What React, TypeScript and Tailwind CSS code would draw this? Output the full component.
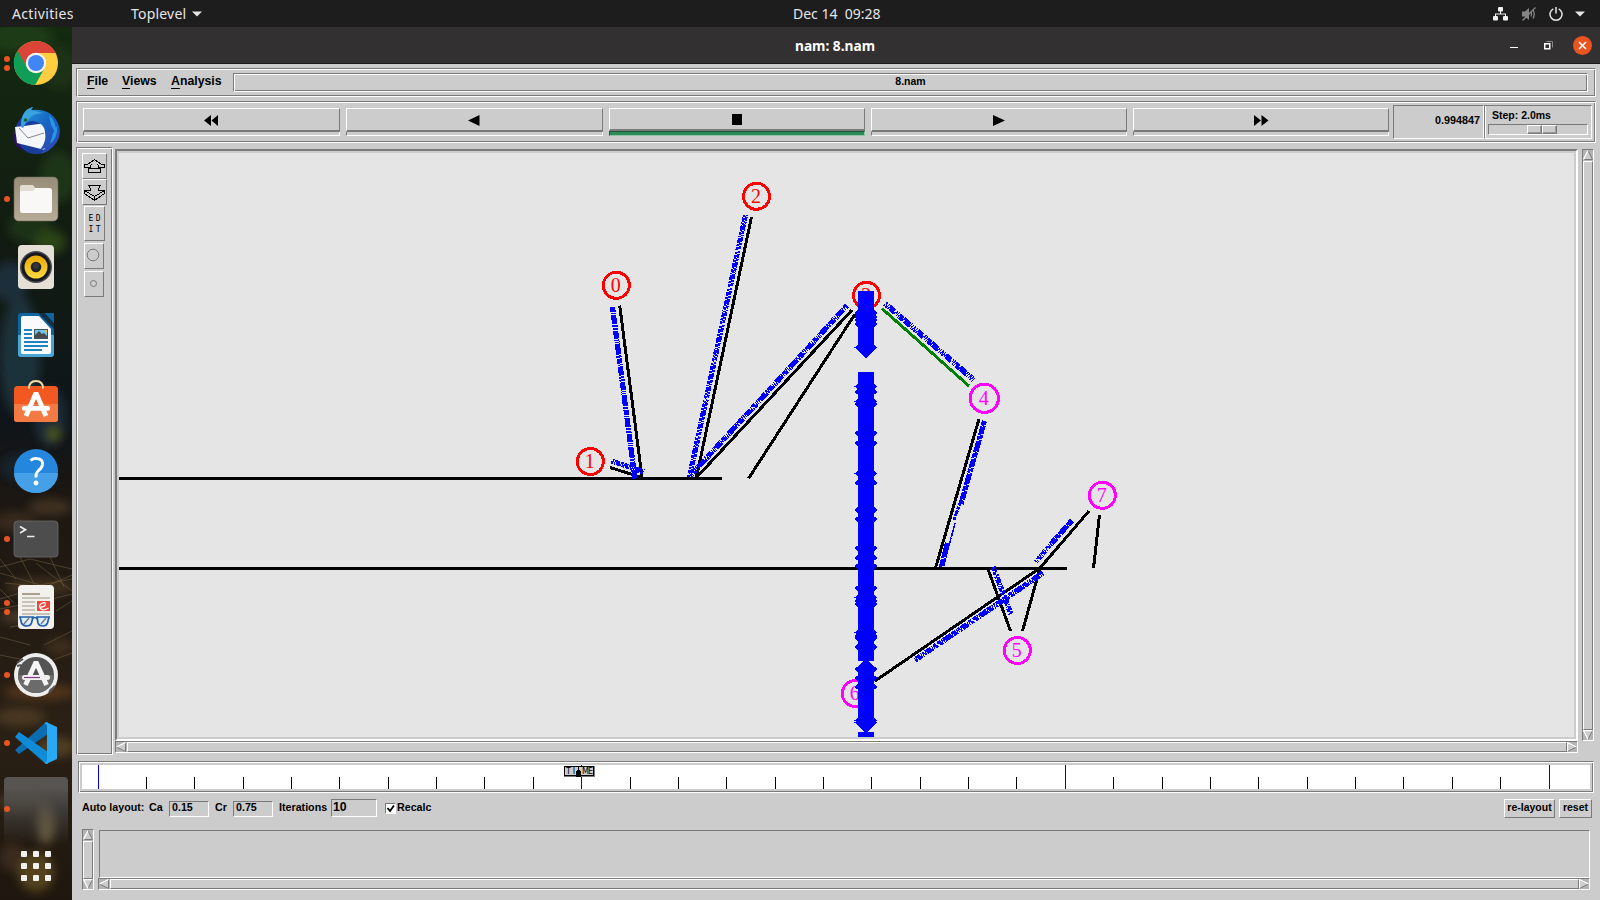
import React from "react";

const GROOVE =
  "border border-t-[#7a7a7a] border-l-[#7a7a7a] border-r-white border-b-white shadow-[inset_1px_1px_0_#fff,inset_-1px_-1px_0_#7a7a7a]";
const RAISED = "border border-t-white border-l-white border-r-[#7a7a7a] border-b-[#7a7a7a]";
const SUNKEN = "border border-t-[#7a7a7a] border-l-[#7a7a7a] border-r-white border-b-white";
const TK = "font-['Liberation_Sans',sans-serif] font-bold text-black whitespace-nowrap";
const SHELL = "font-['Noto_Sans',sans-serif] whitespace-nowrap";

/* ---------- Top bar ---------- */

function TopBar() {
  return (
    <header className={`${SHELL} flex h-[27px] shrink-0 items-center bg-[#1d1d1d] text-[14px] leading-[27px] text-[#e6e6e6]`}>
      <span className="w-[119px] pl-3 tracking-[0.35px]">Activities</span>
      <span className="w-[62px] pl-3 tracking-[0.2px]">Toplevel</span>
      <svg className="ml-[11px]" width="10" height="6" viewBox="0 0 10 6"><path d="M0 .5h10L5 5.5z" fill="#e6e6e6" /></svg>
      <span className="ml-[591px] w-[100px] whitespace-pre">Dec 14  09:28</span>
      <div className="ml-auto flex items-center pr-[15px]">
        <svg width="15" height="14" viewBox="0 0 15 14" fill="#f2f2f2">
          <rect x="5" y="0" width="5" height="4.5" rx="1" />
          <rect x="0" y="9" width="5" height="4.5" rx="1" />
          <rect x="10" y="9" width="5" height="4.5" rx="1" />
          <path d="M7 4h1v2.500h5V9h-1V7.500H3V9H2V6.500h5z" />
        </svg>
        <svg className="ml-[13px]" width="16" height="14" viewBox="0 0 16 14" fill="none" stroke="#858585">
          <path d="M1 4.500h3L8 1v12L4 9.500H1z" fill="#858585" stroke="none" />
          <path d="M10 5q1.300 2 0 4.500M12 3q2.500 4 0 8.500" strokeWidth="1.300" />
          <path d="M14.500 .5L1.500 13.500" strokeWidth="1.300" />
        </svg>
        <svg className="ml-[12px]" width="14" height="14" viewBox="0 0 14 14" fill="none" stroke="#e6e6e6" strokeWidth="1.500">
          <path d="M4.300 1.800a6 6 0 1 0 5.400 0M7 0v6.500" />
        </svg>
        <svg className="ml-[12px]" width="10" height="6" viewBox="0 0 10 6"><path d="M0 .5h10L5 5.500z" fill="#e6e6e6" /></svg>
      </div>
    </header>
  );
}

/* ---------- Dock ---------- */

function Chrome() {
  return (
    <svg width="46" height="46" viewBox="-23 -23 46 46">
      <circle r="22" fill="#ffcd40" />
      <path d="M-19.050 -11A22 22 0 0 1 19.700 -10H0A10 10 0 0 0 -9 4z" fill="#db4437" />
      <path d="M-18.400 -12.200A22 22 0 0 0 -.8 22L8.660 5A10 10 0 0 1 -8.660 5z" fill="#0f9d58" />
      <circle r="10.200" fill="#f4f4f4" />
      <circle r="8" fill="#4285f4" />
    </svg>
  );
}

function Thunderbird() {
  return (
    <svg width="50" height="50" viewBox="0 0 50 50">
      <defs>
        <linearGradient id="tb" x1="0" y1="0" x2="1" y2="1">
          <stop offset="0" stopColor="#2d9be0" /><stop offset=".5" stopColor="#1565c0" /><stop offset="1" stopColor="#3a3fb0" />
        </linearGradient>
      </defs>
      <circle cx="25" cy="27" r="21" fill="#1a3d9c" />
      <path d="M2 24Q1 35 6 41L16 47Q8 41 7 33z" fill="#2a1260" />
      <path d="M4 21L13 20L35 17L40 22L34 44L6 37z" fill="#f4f6fa" />
      <path d="M8 22L17 32L33 27" fill="none" stroke="#888" strokeWidth="1" />
      <path d="M10 20Q10 4 22 1L20 4Q42 2 48 20Q52 35 37 45L30 48L34 42L28 45Q36 36 34 27Q34 17 22 15Q15 14 12 22z" fill="url(#tb)" />
      <path d="M10 20Q10 4 22 1L20 4L32 7Q20 8 17 14L11 22z" fill="#3aa2dc" />
      <path d="M38 9Q46 16 45 28L40 19zM46 20Q47 32 39 38L42 27z" fill="#2496e8" />
      <circle cx="14.500" cy="14" r="1.800" fill="#163" />
    </svg>
  );
}

function Files() {
  return (
    <svg width="46" height="46" viewBox="0 0 46 46">
      <defs><linearGradient id="fl" x1="0" y1="0" x2="0" y2="1"><stop offset="0" stopColor="#968c78" /><stop offset="1" stopColor="#b5ab97" /></linearGradient></defs>
      <rect x="1" y="1" width="44" height="44" rx="4.500" fill="url(#fl)" stroke="#6c6456" strokeWidth=".6" />
      <path d="M7 11q0-2 2-2h11l3 4v6H7z" fill="#e0dccf" />
      <rect x="7" y="12" width="32" height="25" rx="2.500" fill="#f9f8f6" />
      <path d="M7 11v4h13l2-2-1-2z" fill="#e0dccf" />
    </svg>
  );
}

function Rhythmbox() {
  return (
    <svg width="46" height="46" viewBox="0 0 46 46">
      <defs><linearGradient id="rb" x1="0" y1="0" x2="0" y2="1"><stop offset="0" stopColor="#e9a903" /><stop offset="1" stopColor="#f9db3f" /></linearGradient></defs>
      <rect x="5" y="1" width="36" height="44" rx="4" fill="#e4e0d5" />
      <circle cx="23" cy="23" r="16" fill="#4a4a50" /><circle cx="23" cy="23" r="14.500" fill="#16181f" />
      <circle cx="23" cy="23" r="11.500" fill="url(#rb)" /><circle cx="23" cy="23" r="5.300" fill="#202228" /><circle cx="23" cy="22" r="3" fill="#33363c" />
    </svg>
  );
}

function Writer() {
  return (
    <svg width="46" height="46" viewBox="0 0 46 46">
      <rect x="5" y="1" width="36" height="44" rx="3" fill="#0f659f" />
      <path d="M5 23h36v19q0 3-3 3H8q-3 0-3-3z" fill="#4ba5d3" />
      <path d="M25 1h7l9 10v6z" fill="#123047" />
      <path d="M32 1h9v10z" fill="#0f659f" />
      <path d="M10 4h16l12 13v23q0 2-2 2H10q-2 0-2-2V6q0-2 2-2z" fill="#fafafa" />
      <path d="M11 18h8M11 22h8M11 26h8M11 30h24M11 34h24M11 38h18" stroke="#1d84bd" strokeWidth="2" />
      <rect x="21" y="17" width="14" height="10" fill="#3b5566" /><rect x="22" y="18" width="12" height="8" fill="#6cc5ee" />
      <path d="M22 26v-3l4-4 3 3 2-1 3 3v2z" fill="#4a4a4a" /><path d="M31 18h3v3z" fill="#f4c020" />
    </svg>
  );
}

function Software() {
  return (
    <svg width="46" height="46" viewBox="0 0 46 46">
      <rect x="1" y="6" width="44" height="36" rx="3.500" fill="#f2581f" /><path d="M1 24h44v15q0 3-3 3H4q-3 0-3-3z" fill="#f47a44" />
      <path d="M16 8.500q0-7.500 7-7.500t7 7.500" fill="none" stroke="#f5dba6" strokeWidth="2" />
      <path d="M13 36L23 13L33 36" fill="none" stroke="#fff" strokeWidth="4.800" strokeLinejoin="bevel" />
      <rect x="9" y="26" width="28" height="4.800" rx="2" fill="#fff" />
    </svg>
  );
}

function Help() {
  return (
    <svg width="46" height="46" viewBox="0 0 46 46">
      <circle cx="23" cy="23" r="22" fill="#2487dd" /><path d="M1 25a22 20 0 0 0 44 0z" fill="#46a0e8" />
      <path d="M17.500 12.500q3-2.500 6.500-2Q30 11 29.500 16.500Q29 20 25.500 22.500Q22.500 25 23 29.500" fill="none" stroke="#fff" strokeWidth="2.900" />
      <circle cx="23" cy="35" r="2.400" fill="#fff" />
    </svg>
  );
}

function Terminal() {
  return (
    <svg width="46" height="46" viewBox="0 0 46 46">
      <rect x="1" y="5" width="44" height="36" rx="3.500" fill="#4d4d4d" stroke="#6b6b6b" strokeWidth=".8" />
      <path d="M7 10.500l5.500 3.200L7 17M14 20.500h7.500" fill="none" stroke="#eee" strokeWidth="1.700" />
    </svg>
  );
}

function Evince() {
  return (
    <svg width="46" height="46" viewBox="0 0 46 46">
      <rect x="5" y="1" width="36" height="44" rx="4" fill="#f3f1ed" />
      <path d="M9 10h18" stroke="#a89f8d" strokeWidth="2" /><path d="M9 14h28M9 18h13M9 22h13M9 26h13M9 30h28" stroke="#c8c3b6" strokeWidth="2" />
      <rect x="24" y="17" width="13" height="10" fill="#f0453a" />
      <path d="M26.500 23.500q6.500-1 6-3.500t-4-.5-1 5 8-.5" fill="none" stroke="#fff" strokeWidth="1.300" />
      <path d="M7 33h13l-1.500 6q-1 3-4.500 3-4 0-5.500-3zM24 33h12l-1.500 6q-1 3-4.500 3-4 0-5-3z" fill="#dcebf4" stroke="#1e5fae" strokeWidth="1.700" />
      <path d="M19 35q3-3 5 0" fill="none" stroke="#1e5fae" strokeWidth="1.700" /><path d="M11 40l5-6M28 40l5-6" stroke="#777" strokeWidth="1.400" />
    </svg>
  );
}

function Updater() {
  return (
    <svg width="46" height="46" viewBox="-23 -23 46 46">
      <circle r="22" fill="#eee" /><circle r="18" fill="#545454" /><path d="M-18 0a18 18 0 0 0 36 0z" fill="#6b6b6b" />
      <path d="M-19 -12L-13 -16M15 15L19 11M-19 -9l4 -1M13 18l2 -4" stroke="#545454" strokeWidth="2" />
      <path d="M-10.500 10L0 -13L10.500 10" fill="none" stroke="#f5f5f5" strokeWidth="4.800" strokeLinejoin="bevel" />
      <rect x="-14" y="0" width="28" height="5" rx="2.500" fill="#f0f0f0" /><path d="M-12 2.500h16" stroke="#804080" strokeWidth="1.200" />
    </svg>
  );
}

function Code() {
  return (
    <svg width="46" height="46" viewBox="0 0 46 46">
      <path d="M2 30L6 34L35 14V2L33 2z" fill="#0b6cb0" />
      <path d="M2 17L6 12L35 32V44H33z" fill="#0f8bd8" />
      <path d="M33 2L44 7V39L33 44L31 42Q34 43 34 39V7Q34 3 31 4z" fill="#29a8f4" />
    </svg>
  );
}

const DOCK: { icon: React.ReactNode; dots: number }[] = [
  { icon: <Chrome />, dots: 2 },
  { icon: <Thunderbird />, dots: 0 },
  { icon: <Files />, dots: 1 },
  { icon: <Rhythmbox />, dots: 0 },
  { icon: <Writer />, dots: 0 },
  { icon: <Software />, dots: 0 },
  { icon: <Help />, dots: 0 },
  { icon: <Terminal />, dots: 1 },
  { icon: <Evince />, dots: 2 },
  { icon: <Updater />, dots: 1 },
  { icon: <Code />, dots: 1 },
  { icon: null, dots: 1 },
];

const BLOBS: [number, number, number, number, string][] = [
  [20, 10, 34, 16, "#1d3a16"], [60, 40, 18, 22, "#1a3312"], [58, 150, 18, 26, "#1f3519"], [30, 200, 22, 16, "#1a3018"],
  [10, 255, 18, 20, "#1e2f3b"], [50, 215, 16, 12, "#2c4416"], [20, 330, 20, 60, "#1f303b"], [50, 390, 16, 30, "#1c2c35"],
  [54, 407, 7, 6, "#4e5a0c"], [20, 440, 20, 14, "#17222a"], [50, 480, 22, 8, "#3f3020"], [15, 495, 22, 10, "#382a1d"],
  [40, 560, 34, 8, "#40311f"], [20, 590, 20, 5, "#4f3f2a"], [60, 620, 14, 8, "#3d2d1b"], [40, 665, 36, 8, "#52341c"],
  [20, 690, 26, 9, "#4a3821"], [56, 720, 20, 10, "#503d22"], [20, 775, 22, 10, "#443724"], [46, 795, 9, 22, "#6a5c3c"],
  [12, 830, 12, 14, "#3a2c1b"], [36, 845, 18, 20, "#52431f"],
];

function Dock() {
  return (
    <aside className="relative h-[873px] w-[72px] shrink-0 overflow-hidden bg-[#10140f]">
      <svg className="absolute inset-0" width="72" height="873" viewBox="0 0 72 873">
        <defs>
          <linearGradient id="bgd" x1="0" y1="0" x2="0" y2="1">
            <stop offset="0" stopColor="#142a10" /><stop offset=".25" stopColor="#121b12" /><stop offset=".45" stopColor="#0f151a" />
            <stop offset=".54" stopColor="#1c1712" /><stop offset=".8" stopColor="#2a2015" /><stop offset="1" stopColor="#1f170f" />
          </linearGradient>
          <filter id="soft" x="-50%" y="-50%" width="200%" height="200%"><feGaussianBlur stdDeviation="5" /></filter>
          <filter id="fine"><feGaussianBlur stdDeviation=".5" /></filter>
        </defs>
        <rect width="72" height="873" fill="url(#bgd)" />
        <g filter="url(#soft)">
          {BLOBS.map(([x, y, rx, ry, c], i) => <ellipse key={i} cx={x} cy={y} rx={rx} ry={ry} fill={c} />)}
        </g>
        <g stroke="#7a6243" strokeOpacity=".5" fill="none" filter="url(#fine)">
          <path d="M0 540l30-8 42 10M5 556l40 4 27-12M0 572l34-10M40 575l32-8M0 610l30 8M44 618l28-14M0 532l16 20M50 530l14 30M10 600l40-6M0 546l40 12 32-6M20 530l20 38M0 562l14 14M36 536l36 28M0 582l20-4M56 584l16-10M0 628l20 4M50 634l22-8" />
        </g>
      </svg>
      <div className="relative flex flex-col pt-[2px]">
        {DOCK.map((d, i) => (
          <div key={i} className={`flex h-[68px] items-center ${i === 11 ? "relative mx-1 rounded-t bg-linear-to-b from-[#5c5a58]/90 from-15% via-[#4b4a49]/70 via-45% to-transparent" : "px-1"}`}>
            <div className={`flex flex-col items-center gap-[3px] ${i === 11 ? "-mt-1 w-[6px]" : "w-[6px]"}`}>
              {Array.from({ length: d.dots }, (_, k) => <i key={k} className="size-[6px] rounded-full bg-[#e95420]" />)}
            </div>
            <div className="ml-[1px] flex w-[50px] justify-center">{d.icon}</div>
          </div>
        ))}
        <div className="mt-[6px] ml-[21px] grid w-[30px] grid-cols-3 gap-[6px]">
          {Array.from({ length: 9 }, (_, k) => <i key={k} className="size-[6px] rounded-[1px] bg-[#f2f1ef]" />)}
        </div>
      </div>
    </aside>
  );
}

/* ---------- Tk widgets ---------- */

function Arrow({ dir }: { dir: "l" | "r" | "u" | "d" }) {
  const shape = {
    l: ["M9.500 .5L.5 5", "M.5 5L9.500 9.500V.5", "M0 5L10 0V10z"],
    r: ["M.5 9.500V.5L9.500 5", "M9.500 5L.5 9.500", "M10 5L0 0V10z"],
    u: ["M.5 9.500L5 .5", "M5 .5L9.500 9.500H.5", "M5 0L10 10H0z"],
    d: ["M9.500 .5H.5L5 9.500", "M5 9.500L9.500 .5", "M5 10L0 0H10z"],
  }[dir];
  return (
    <svg className="shrink-0 bg-[#b3b3b3]" width="10" height="10" viewBox="0 0 10 10" fill="none">
      <path d={shape[2]} fill="#ccc" />
      <path d={shape[1]} stroke="#7a7a7a" />
      <path d={shape[0]} stroke="#fff" strokeWidth="1.300" />
    </svg>
  );
}

function HScroll() {
  return (
    <div className={`${SUNKEN} flex h-[12px] w-full bg-[#b3b3b3]`}>
      <Arrow dir="l" /><div className={`${RAISED} ml-px grow bg-[#ccc]`} /><Arrow dir="r" />
    </div>
  );
}

function VScroll() {
  return (
    <div className={`${SUNKEN} flex h-full w-[12px] flex-col bg-[#b3b3b3]`}>
      <Arrow dir="u" /><div className={`${RAISED} mt-px grow bg-[#ccc]`} /><Arrow dir="d" />
    </div>
  );
}

function TitleBar() {
  return (
    <div className={`${SHELL} flex h-[37px] shrink-0 items-center border-b border-[#1b1a1a] bg-[#333031] text-white`}>
      <div className="w-[1438px] pt-[2px] pl-[88px] text-center text-[13.700px] font-bold leading-[34px]">nam: 8.nam</div>
      <i className="mt-[5px] h-px w-[8px] bg-white" />
      <svg className="ml-[26px]" width="9" height="9" viewBox="0 0 9 9" fill="none">
        <path d="M2.500 .5h6v6" stroke="#8a8888" /><rect x=".75" y="2.750" width="5" height="5" stroke="#fff" strokeWidth="1.500" />
      </svg>
      <svg className="ml-[20px]" width="19" height="19" viewBox="0 0 19 19">
        <circle cx="9.500" cy="9.500" r="9.500" fill="#e95420" /><path d="M6 6l7 7M13 6l-7 7" stroke="#fff" strokeWidth="1.600" />
      </svg>
    </div>
  );
}

function MenuBar() {
  return (
    <div className={`${GROOVE} flex h-[29px] items-start pt-1 pl-[10px] pr-[7px] text-[12.300px] ${TK}`}>
      <span className="w-[35px] pt-px leading-[15px]"><u className="underline-offset-[3px]">F</u>ile</span>
      <span className="w-[49px] pt-px leading-[15px]"><u className="underline-offset-[3px]">V</u>iews</span>
      <span className="w-[62px] pt-px leading-[15px]"><u className="underline-offset-[3px]">A</u>nalysis</span>
      <div className={`${GROOVE} h-[19px] grow text-center text-[10.500px] leading-[15px]`}>8.nam</div>
    </div>
  );
}

const BUTTONS = [
  "M7 0v11L0 5.500zM14 0v11L7.500 5.500z",
  "M12.500 0v11L1 5.500z",
  "M2 0h10v11H2z",
  "M1 0v11L13 5.500z",
  "M0 0v11L7 5.500zM7.500 0v11L14.500 5.500z",
];

function ToolBar() {
  return (
    <div className={`${GROOVE} mt-1 flex h-[42px] pt-[3px] pl-[6px]`}>
      <div className="mt-[3px] grid grid-cols-[257px_257px_256px_256px_256px] gap-[6px]">
        {BUTTONS.map((d, i) => (
          <div key={i} className="flex h-[28px] flex-col">
            <div className={`${RAISED} flex h-[24px] items-center justify-center border-b-2 pt-px`}>
              <svg width="15" height="11" viewBox="0 0 15 11"><path d={d} /></svg>
            </div>
            <div className={i === 2 ? "h-[5px] border border-t-[#1d5a3a] border-l-[#1d5a3a] border-r-[#8fc7a6] border-b-[#8fc7a6] bg-[#2e8b57]" : `${SUNKEN} h-[4px] border-t-0`} />
          </div>
        ))}
      </div>
      <div className={`${SUNKEN} ml-1 h-[34px] w-[91px] pr-[3px] text-right text-[10.800px] leading-[29px] ${TK}`}>0.994847</div>
      <div className={`${SUNKEN} h-[34px] w-[108px] pl-[3px] shadow-[inset_1px_0_0_#fff] ${TK}`}>
        <div className="pt-[2px] pl-1 text-[10.500px] leading-[14px]">Step: 2.0ms</div>
        <div className={`${SUNKEN} mt-[2px] flex h-[11px] w-[100px] pl-[38px]`}>
          <div className={`${RAISED} h-[9px] w-[15px] shadow-[inset_-1px_-1px_0_#999]`} />
          <div className={`${RAISED} h-[9px] w-[15px] shadow-[inset_-1px_-1px_0_#999]`} />
        </div>
      </div>
    </div>
  );
}

function ToolPanel() {
  return (
    <div className={`${GROOVE} flex w-[37px] flex-col pt-[5px] pl-[5px]`}>
      <div className={`${RAISED} h-[26px] w-[25px]`}>
        <svg width="23" height="24" viewBox="0 0 23 24" fill="none" stroke="#000" shapeRendering="crispEdges">
          <path d="M11.500 5.500L4.500 10.500H1.500V13.500H6.500L8.500 10.500M11.500 5.500L18.500 10.500H21.500V13.500H16.500L14.500 10.500M5.500 14.500H17.500V18.500H5.500zM7.500 12v3M15.500 12v3" />
        </svg>
      </div>
      <div className={`${RAISED} h-[26px] w-[25px]`}>
        <svg width="23" height="24" viewBox="0 0 23 24" fill="none" stroke="#000" shapeRendering="crispEdges">
          <path d="M5.500 5.500H17.500L15.500 8.500V10H21.500V13.500L11.500 20.500L1.500 13.500V10H7.500V8.500zM1.500 10.500L11.500 16.500L21.500 10.500M11.500 16v4" />
        </svg>
      </div>
      <div className={`${RAISED} mt-[1px] ml-[2px] h-[35px] w-[21px] pt-[6px] pl-[3.500px] font-['DejaVu_Sans_Mono',monospace] text-[8px] leading-[11px] tracking-[2.500px] whitespace-nowrap text-black`}>
        <div>ED</div><div>IT</div>
      </div>
      <div className={`${RAISED} mt-[2px] ml-[2px] h-[26px] w-[20px]`}>
        <svg width="18" height="24" viewBox="0 0 18 24"><circle cx="8" cy="11" r="5.800" fill="none" stroke="#7a7a7a" /></svg>
      </div>
      <div className={`${RAISED} mt-[2px] ml-[2px] h-[26px] w-[20px]`}>
        <svg width="18" height="24" viewBox="0 0 18 24"><circle cx="8.500" cy="11.500" r="3" fill="none" stroke="#7a7a7a" /></svg>
      </div>
    </div>
  );
}

/* ---------- Network canvas ---------- */

type Seg = [number, number, number, number];

const LINKS: Seg[] = [
  [119, 478.5, 722, 478.5], [119, 568.5, 1067, 568.5], [619.7, 305.5, 642, 477], [751.5, 217, 696.5, 477],
  [852, 310, 697, 477], [855, 314, 748.5, 478.5], [610, 467.5, 642, 477.5], [979, 419, 935.5, 568],
  [1089, 511, 1040, 568], [1099.5, 515, 1093.5, 568], [988, 569, 1010.5, 631], [1040, 568, 1022.5, 631], [875, 681, 1040, 568],
];

const FLOWS: [Seg, string, number][] = [
  [[612.5, 307, 635, 479], "5 1 1 1 9 1 2 1 2 1 8 1 1 1 1 1 11 1 2 1", 5],
  [[745.5, 215, 689.5, 477], "2 1 4 1 2 1 6 1 3 1 1 1 5 1 2 1 3 2", 5],
  [[847, 305.5, 690, 476], "4 1 1 1 8 1 1 1 1 1 6 1 2 1 10 1 1 1 1 1", 5],
  [[611.5, 461, 644, 472], "2 1 1 1 5 1 3 1 4 1", 5],
  [[885, 303.5, 974, 380], "1 1 2 1 1 1 7 2 1 1 1 1 5 1 8 1 1 1", 5.4],
  [[984.5, 421, 961, 504], "5 1 9 1 4 1 12 1", 5],
  [[961, 500, 954, 520], "6 1 3 1", 3],
  [[955, 523, 948, 550], "14 1 9 1", 1.5],
  [[947.5, 543, 941, 569], "16 1 8", 5],
  [[1072, 520.5, 1050, 545], "7 1 11 1 4 1", 5],
  [[1050, 545, 1036, 562], "1 1 3 2 1 1 4 1", 4.5],
  [[993, 567, 1011, 614], "4 1 3 2 2 1 6 1 1 1", 5],
  [[1043, 573, 915, 660], "3 1 1 1 7 1 2 1 1 1 5 1 9 1 1 1 4 2", 5.2],
];

/* Each flow is two adjacent strands whose dashes are slightly out of step. */
function Flow({ seg: [a, b, c, d], dash, w }: { seg: Seg; dash: string; w: number }) {
  if (w < 4) return <line x1={a} y1={b} x2={c} y2={d} strokeWidth={w} strokeDasharray={dash} />;
  const len = Math.hypot(c - a, d - b);
  const nx = (-(d - b) / len) * (w / 4);
  const ny = ((c - a) / len) * (w / 4);
  const skew = Math.abs(c - a) / len > 0.2 ? 1.6 : 0;
  return (
    <>
      <line x1={a + nx} y1={b + ny} x2={c + nx} y2={d + ny} strokeWidth={w / 2 + 0.2} strokeDasharray={dash} />
      <line x1={a - nx} y1={b - ny} x2={c - nx} y2={d - ny} strokeWidth={w / 2 + 0.2} strokeDasharray={dash} strokeDashoffset={skew} />
    </>
  );
}

const DIAMONDS = [
  312.7, 317.3, 320, 324, 347.5, 386.5, 391.7, 401.5, 404, 433.3, 443.3, 473.5, 482.7, 510, 519.3, 548.3, 557.7, 566.3,
  588.3, 597.5, 601, 604.3, 632.5, 636, 638.3, 647, 669.3, 678.3, 686.7, 720.5, 722.5,
];

const NODES: [number, number, string, string, number][] = [
  [616.3, 285.3, "0", "#f00", 13], [590.3, 461.5, "1", "#f00", 13], [756.5, 196.3, "2", "#f00", 13], [866.5, 295.3, "3", "#f00", 13],
  [984.3, 398.3, "4", "#f0f", 14.1], [1102.3, 495.3, "7", "#f0f", 13], [1017.3, 650.5, "5", "#f0f", 13], [855.3, 693.5, "6", "#f0f", 13],
];

function Topology() {
  return (
    <svg className="block" width="1455" height="584" viewBox="119 153 1455 584" shapeRendering="crispEdges">
      <g stroke="#000" strokeWidth="3">
        {LINKS.map(([a, b, c, d], i) => <line key={i} x1={a} y1={b} x2={c} y2={d} />)}
        <line x1="882" y1="308.500" x2="969" y2="386" stroke="#008000" />
      </g>
      {NODES.map(([x, y, t, c, r]) => (
        <g key={t}>
          <circle cx={x} cy={y} r={r} fill="none" stroke={c} strokeWidth="3" />
          <text x={x - 0.5} y={y + 6.8} fill={c} fontSize="20" textAnchor="middle" className="font-['Liberation_Serif',serif]">{t}</text>
        </g>
      ))}
      <g stroke="#00f">
        {FLOWS.map(([seg, dash, w], i) => <Flow key={i} seg={seg} dash={dash} w={w} />)}
      </g>
      <g fill="#00f">
        <rect x="858" y="291" width="16" height="57" />
        <rect x="858" y="372" width="16" height="289" />
        <rect x="858" y="669" width="16" height="54" />
        <rect x="858" y="732" width="16" height="5" />
        {DIAMONDS.map((y) => <path key={y} d={`M866 ${y - 10.5}L877.500 ${y}L866 ${y + 10.5}L854.500 ${y}z`} />)}
      </g>
    </svg>
  );
}

function Timeline() {
  return (
    <div className={`${GROOVE} mx-[2px] mt-[6px] h-[32px] p-[3px]`}>
      <svg className="block bg-white" width="1508" height="24" viewBox="82 765 1508 24">
        {Array.from({ length: 31 }, (_, k) => {
          const x = Math.floor(98 + k * 48.367);
          const major = k % 10 === 0;
          return <rect key={k} x={x} y={major ? 765 : 777} width="1" height={major ? 24 : 12} fill={major ? "#0000e0" : "#000"} />;
        })}
        <rect x="564" y="766" width="31" height="11" fill="#777" />
        <rect x="564.500" y="766.500" width="29" height="9" fill="#ccc" stroke="#000" />
        <text x="566" y="774" fontSize="8" textLength="9" className="font-['DejaVu_Sans',sans-serif]">TI</text>
        <text x="582" y="774" fontSize="8" textLength="11" className="font-['DejaVu_Sans',sans-serif]">ME</text>
        <path d="M578 766h1v3l2 3v5h-5v-5l2-3z" shapeRendering="crispEdges" />
      </svg>
    </div>
  );
}

function LayoutControls() {
  return (
    <div className={`flex h-[36px] items-start px-[6px] pt-[5px] text-[10.700px] leading-[18px] ${TK}`}>
      <span className="w-[67px]">Auto layout:</span>
      <span className="w-[20px]">Ca</span>
      <div className={`${SUNKEN} mt-[3px] h-[16px] w-[40px] pl-[2px] text-[10.700px] leading-[11px]`}>0.15</div>
      <span className="ml-[6px] w-[18px]">Cr</span>
      <div className={`${SUNKEN} mt-[3px] h-[16px] w-[40px] pl-[2px] text-[10.700px] leading-[11px]`}>0.75</div>
      <span className="ml-[6px] w-[52px]">Iterations</span>
      <div className={`${SUNKEN} mt-[1px] h-[18px] w-[46px] pl-[1px] text-[12.300px] leading-[15px]`}>10</div>
      <div className={`${SUNKEN} mt-[5px] ml-[8px] size-[11px] bg-white`}>
        <svg width="9" height="9" viewBox="0 0 9 9"><path d="M1.500 4l2.500 3L8 1.500" fill="none" stroke="#000" strokeWidth="1.800" /></svg>
      </div>
      <span className="ml-[1px]">Recalc</span>
      <div className={`${RAISED} mt-[1px] ml-auto h-[19px] w-[51px] text-center text-[10.500px] leading-[15px]`}>re-layout</div>
      <div className={`${RAISED} mt-[1px] ml-[4px] mr-[-2px] h-[19px] w-[33px] text-center text-[10.500px] leading-[15px]`}>reset</div>
    </div>
  );
}

export default function App() {
  return (
    <div className="flex h-[900px] w-[1600px] flex-col overflow-hidden">
      <TopBar />
      <div className="flex">
        <Dock />
        <main className="flex h-[873px] w-[1528px] flex-col bg-[#ccc]">
          <TitleBar />
          <div className="flex flex-col px-1 pt-1">
            <MenuBar />
            <ToolBar />
            <div className="mt-1 flex h-[608px]">
              <ToolPanel />
              <div className="mt-[2px] ml-[2px] w-[1463px]">
                <div className="h-[592px] border-2 border-t-[#7a7a7a] border-l-[#7a7a7a] border-r-white border-b-white bg-[#ccc] p-[2px]">
                  <div className="h-[584px] bg-[#e5e5e5]"><Topology /></div>
                </div>
                <HScroll />
              </div>
              <div className="mt-[2px] ml-1 h-[592px]"><VScroll /></div>
            </div>
            <Timeline />
            <LayoutControls />
            <div className="flex h-[61px] pl-[6px]">
              <VScroll />
              <div className="ml-1 w-[1492px]">
                <div className={`${SUNKEN} ml-px mt-px h-[48px]`} />
                <HScroll />
              </div>
            </div>
          </div>
        </main>
      </div>
    </div>
  );
}
